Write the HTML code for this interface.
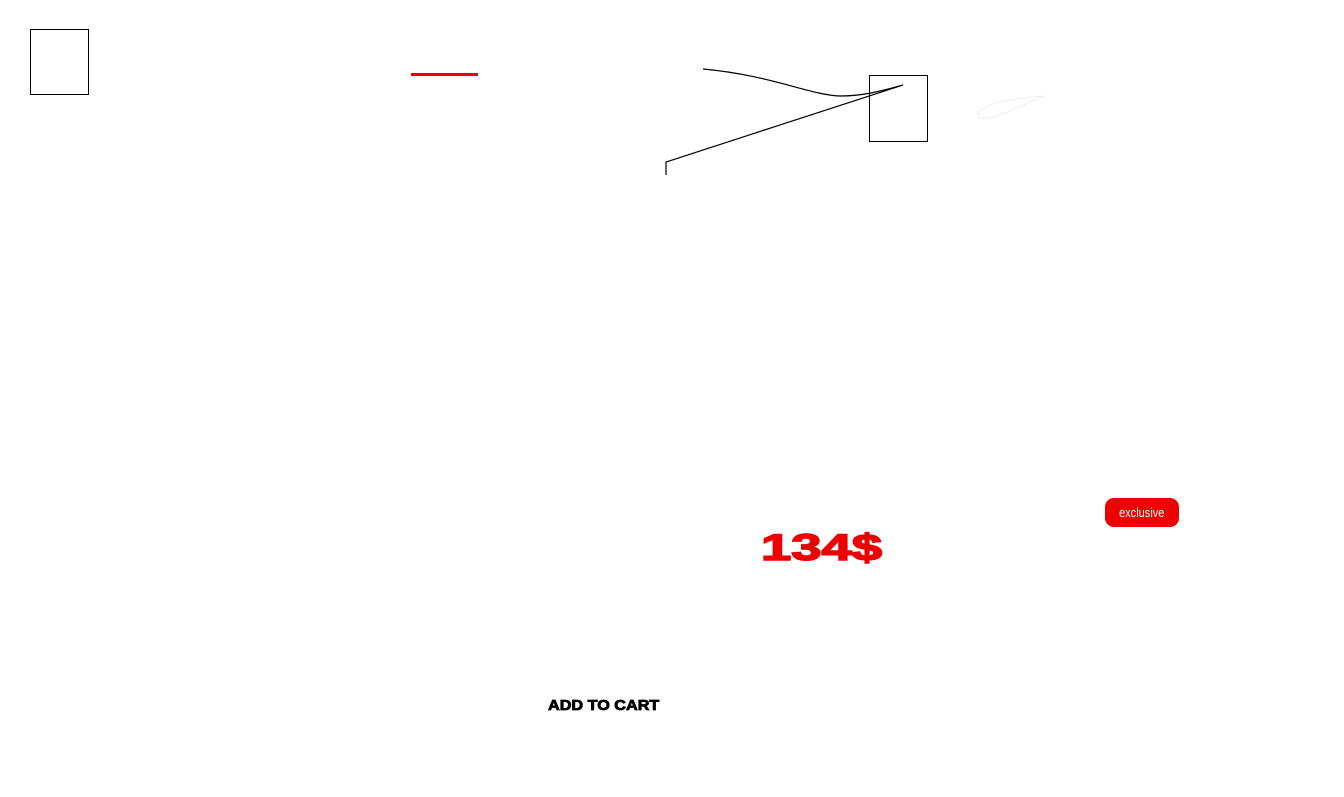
<!DOCTYPE html>
<html><head><meta charset="utf-8"><style>
html,body{margin:0;padding:0;background:#fff;width:1344px;height:797px;overflow:hidden;position:relative;font-family:"Liberation Sans",sans-serif}
.a{position:absolute}
</style></head><body>
<div class="a" style="left:30px;top:29px;width:57px;height:64px;border:1px solid #000"></div>
<div class="a" style="left:411px;top:73px;width:67px;height:3px;background:#e00"></div>
<div class="a" style="left:869px;top:75px;width:57px;height:65px;border:1px solid #000"></div>
<svg class="a" style="left:0;top:0" width="1344" height="797">
<path d="M703 69 C770 75 810 95 840 96 C865 96 885 90 903 85 L666 162 L666 175" fill="none" stroke="#000" stroke-width="1.2"/>
<path d="M980 118 C972 110 990 100 1045 96 C1010 110 990 122 980 118Z" fill="none" stroke="#eee" stroke-width="1"/>
</svg>
<div class="a" style="left:761px;top:526px;font-size:37px;font-weight:bold;color:#e00;-webkit-text-stroke:1.5px #e00;transform:scaleX(1.47);transform-origin:left top;line-height:44px">134$</div>
<div class="a" style="left:1105px;top:498px;width:74px;height:29px;border-radius:9px;background:#e00;color:#fff;font-size:13px;line-height:29px;text-align:center"><span style="display:inline-block;transform:scaleX(0.85)">exclusive</span></div>
<div class="a" style="left:548px;top:697px;font-size:15px;font-weight:900;color:#000;-webkit-text-stroke:0.8px #000;transform:scaleX(1.08);transform-origin:left top;line-height:18px">ADD TO CART</div>
</body></html>
